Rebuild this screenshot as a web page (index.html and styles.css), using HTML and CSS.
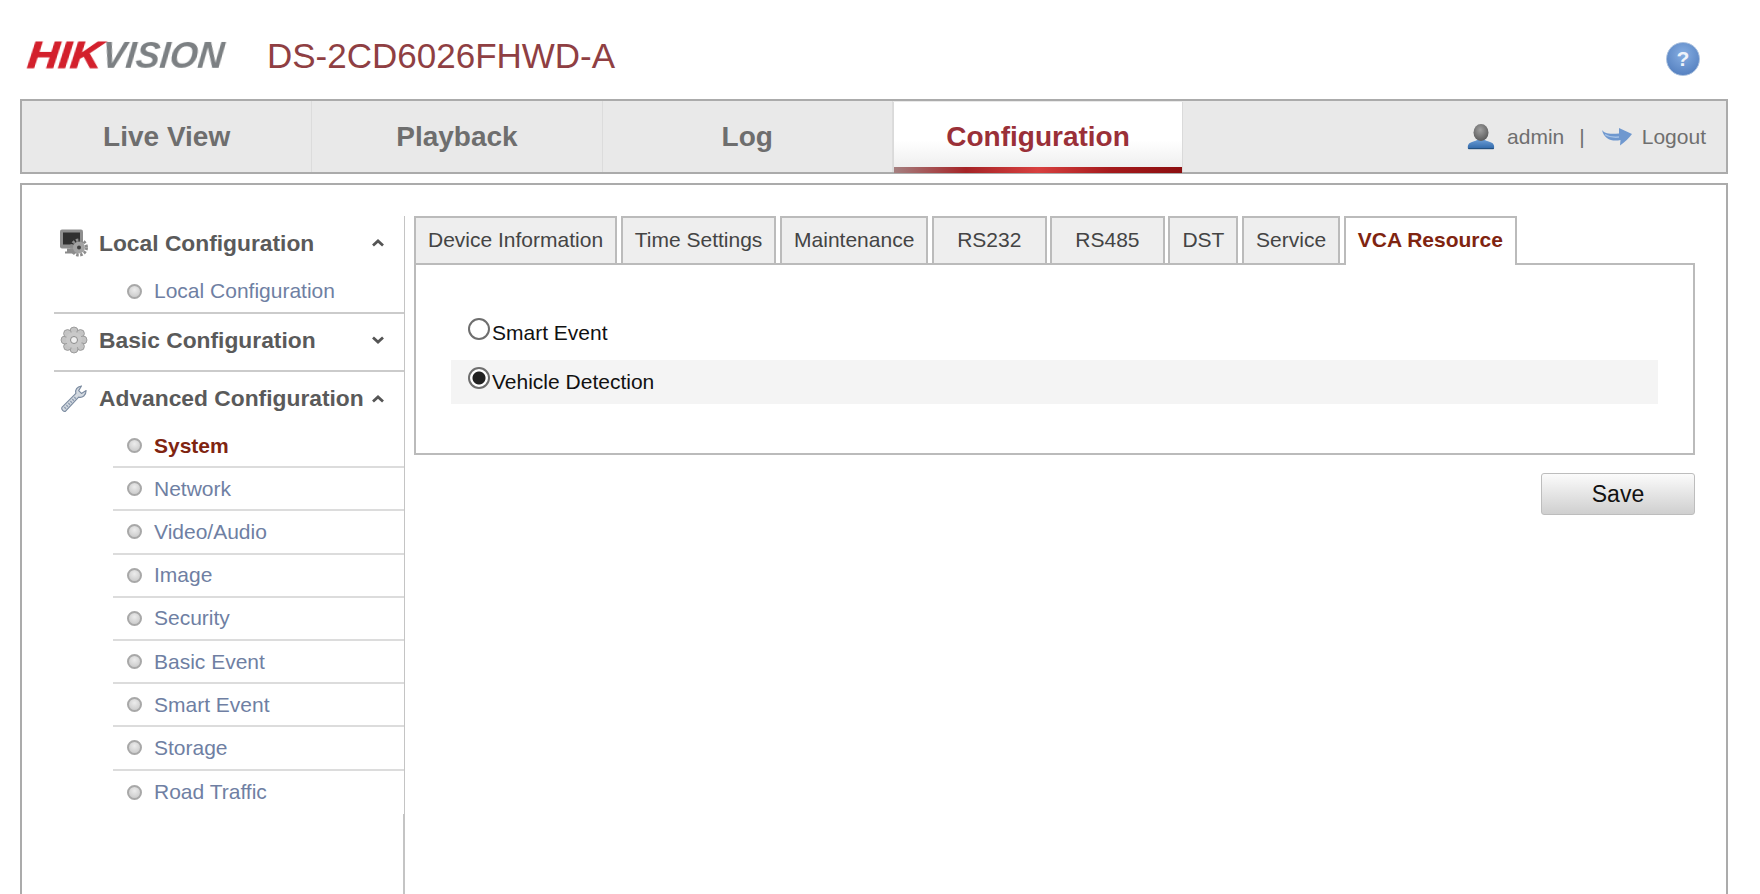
FILE: index.html
```html
<!DOCTYPE html>
<html lang="en">
<head>
    <meta charset="UTF-8">
    <meta name="viewport" content="width=device-width, initial-scale=1.0">
    <title>DS-2CD6026FHWD-A</title>
    <link rel="stylesheet" href="styles.css">
</head>
<body>
    <header class="header">
        <div class="logo"><span class="logo-red">HIK</span><span class="logo-grey">VISION</span></div>
        <div class="model">DS-2CD6026FHWD-A</div>
        <div class="help">?</div>
    </header>

    <nav class="nav">
        <a class="nav-item">Live View</a>
        <a class="nav-item">Playback</a>
        <a class="nav-item">Log</a>
        <a class="nav-item active">Configuration</a>
        <div class="user-box">
            <svg class="user-icon" viewBox="0 0 28 26">
                <defs>
                    <radialGradient id="headGrad" cx="0.45" cy="0.35" r="0.7">
                        <stop offset="0" stop-color="#a0a0a0"/>
                        <stop offset="1" stop-color="#565656"/>
                    </radialGradient>
                    <linearGradient id="bodyGrad" x1="0" y1="0" x2="0" y2="1">
                        <stop offset="0" stop-color="#6fa0d8"/>
                        <stop offset="1" stop-color="#2f67a8"/>
                    </linearGradient>
                </defs>
                <path d="M1 25c-.6-4 .6-6 4-7 3-1 5-1.500 6-3h6c1 1.500 3 2 6 3 3.400 1 4.600 3 4 7z" fill="url(#bodyGrad)"/>
                <path d="M1.500 24.600h25" stroke="#24507f" stroke-width="1.200"/>
                <ellipse cx="14" cy="8.500" rx="7.500" ry="8.500" fill="url(#headGrad)"/>
            </svg>
            <span>admin</span>
            <span class="sep">|</span>
            <svg class="logout-icon" viewBox="0 0 30 18">
                <path d="M0 2C2 5 6 6.500 17 5.500L17 0l13 6c-3 4-7 8-12 11.500l.5-5.500C10 14 2 11 0 2z" fill="#6f98cf"/>
                <path d="M3 6.500c3 2 8 3 14 2.500" stroke="#a6c2e6" stroke-width="1.500" fill="none"/>
            </svg>
            <span>Logout</span>
        </div>
    </nav>

    <div class="content">
        <aside class="sidebar">
            <div class="menu">
                <div class="section first">
                    <div class="menu-head">
                        <svg class="head-icon" viewBox="0 0 28 27">
                            <rect x="0" y="0" width="23" height="19" rx="2" fill="#8f8f8f"/>
                            <rect x="3" y="3" width="17" height="12" fill="#303030"/>
                            <path d="M7 19h9v3h2v2H5v-2h2z" fill="#8a8a8a"/>
                            <circle cx="19" cy="18" r="7.500" fill="none" stroke="#8c8c8c" stroke-width="3" stroke-dasharray="2.500 1.500"/>
                            <circle cx="19" cy="18" r="6" fill="#a2a2a2"/>
                            <circle cx="19" cy="18" r="2" fill="#3e3e3e"/>
                        </svg>
                        <span class="head-text">Local Configuration</span>
                        <svg class="chevron" viewBox="0 0 12 8"><path d="M1 6.500l5-4.500 5 4.500"/></svg>
                    </div>
                    <div class="sub-item last"><i class="dot"></i>Local Configuration</div>
                </div>
                <div class="section closed">
                    <div class="menu-head">
                        <svg class="head-icon" viewBox="0 0 28 28">
                            <g fill="#c4c4c4" stroke="#8f8f8f" stroke-width="0.800">
                                <circle cx="14" cy="5" r="4"/>
                                <circle cx="20.400" cy="7.600" r="4"/>
                                <circle cx="23" cy="14" r="4"/>
                                <circle cx="20.400" cy="20.400" r="4"/>
                                <circle cx="14" cy="23" r="4"/>
                                <circle cx="7.600" cy="20.400" r="4"/>
                                <circle cx="5" cy="14" r="4"/>
                                <circle cx="7.600" cy="7.600" r="4"/>
                            </g>
                            <circle cx="14" cy="14" r="8" fill="#c9c9c9"/>
                            <circle cx="14" cy="14" r="3.500" fill="#efefef" stroke="#8a8a8a"/>
                        </svg>
                        <span class="head-text">Basic Configuration</span>
                        <svg class="chevron" viewBox="0 0 12 8"><path d="M1 1.500l5 4.500 5-4.500"/></svg>
                    </div>
                </div>
                <div class="section">
                    <div class="menu-head">
                        <svg class="head-icon" viewBox="0 0 30 30">
                            <path d="M2 24L17 9c-1-4 1-7 6-8l-3 5 3 3 5-3c0 5-4 8-8 7L6 28c-2 1-5-2-4-4z" fill="#d3d9e0" stroke="#7b8ba0" stroke-width="1.200" stroke-linejoin="round"/>
                            <path d="M5 25l12-12" stroke="#8f9eb2" stroke-width="2.500" stroke-dasharray="1.500 1.500"/>
                        </svg>
                        <span class="head-text">Advanced Configuration</span>
                        <svg class="chevron" viewBox="0 0 12 8"><path d="M1 6.500l5-4.500 5 4.500"/></svg>
                    </div>
                    <div class="sub-item selected"><i class="dot"></i>System</div>
                    <div class="sub-item"><i class="dot"></i>Network</div>
                    <div class="sub-item"><i class="dot"></i>Video/Audio</div>
                    <div class="sub-item"><i class="dot"></i>Image</div>
                    <div class="sub-item"><i class="dot"></i>Security</div>
                    <div class="sub-item"><i class="dot"></i>Basic Event</div>
                    <div class="sub-item"><i class="dot"></i>Smart Event</div>
                    <div class="sub-item"><i class="dot"></i>Storage</div>
                    <div class="sub-item last"><i class="dot"></i>Road Traffic</div>
                </div>
            </div>
        </aside>

        <main class="main">
            <div class="tabs">
                <div class="tab">Device Information</div>
                <div class="tab">Time Settings</div>
                <div class="tab">Maintenance</div>
                <div class="tab wide">RS232</div>
                <div class="tab wide">RS485</div>
                <div class="tab">DST</div>
                <div class="tab">Service</div>
                <div class="tab current">VCA Resource</div>
            </div>
            <div class="panel">
                <label class="row"><i class="radio"></i>Smart Event</label>
                <label class="row on"><i class="radio checked"></i>Vehicle Detection</label>
            </div>
            <div class="actions">
                <button class="save">Save</button>
            </div>
        </main>
    </div>
</body>
</html>
```

FILE: styles.css
```css
html, body {
    margin: 0;
    height: 100%;
    overflow: hidden;
}
body {
    font-family: "Liberation Sans", Arial, sans-serif;
    background: #fff;
}

/* top line */
.header {
    display: flex;
    align-items: center;
    height: 99px;
    padding: 0 60px 0 28px;
    box-sizing: border-box;
}
.logo {
    width: 239px;
    font-size: 36px;
    font-weight: bold;
    font-style: italic;
    line-height: 40px;
    margin-top: 13px;
    white-space: nowrap;
    transform: skewX(-6deg);
    filter: blur(0.5px);
}
.logo-red {
    display: inline-block;
    margin-right: 12px;
    color: #d3202c;
    -webkit-text-stroke: 1px #d3202c;
    transform: scaleX(1.19);
    transform-origin: left center;
}
.logo-grey {
    color: #7c8083;
}
.model {
    font-size: 35px;
    color: #8f3f43;
    margin-top: 13px;
}
.help {
    margin-left: auto;
    margin-top: 19px;
    width: 34px;
    height: 34px;
    border-radius: 50%;
    background: radial-gradient(circle at 50% 35%, #86aee2, #4a76b8);
    border: 1px solid #a9c0de;
    box-sizing: border-box;
    color: #eef3fa;
    font-size: 21px;
    font-weight: bold;
    line-height: 32px;
    text-align: center;
}

/* main navigation */
.nav {
    display: flex;
    height: 75px;
    margin: 0 32px 9px 20px;
    border: 2px solid #ababab;
    box-sizing: border-box;
    background: #e9e9e9;
}
.nav-item {
    flex: 0 0 290.300px;
    box-sizing: border-box;
    border-right: 1px solid #dcdcdc;
    font-size: 28px;
    font-weight: bold;
    color: #6e6e6e;
    line-height: 71px;
    text-align: center;
}
.nav-item.active {
    position: relative;
    margin-top: 1px;
    background: linear-gradient(#fff 55%, #ececec);
    border-right: 1px solid #dadada;
    border-left: 1px solid #dadada;
    color: #9a3038;
    line-height: 69px;
}
.nav-item.active::after {
    content: "";
    position: absolute;
    left: 0;
    right: 0;
    bottom: -1px;
    height: 6px;
    background: linear-gradient(90deg, #a58080, #a52326 25%, #d8403f 50%, #a51a1c 75%, #8c0f10);
}
.user-box {
    display: flex;
    align-items: center;
    margin-left: auto;
    padding-right: 20px;
    font-size: 21px;
    color: #6f6f6f;
}
.user-icon {
    width: 28px;
    height: 26px;
    margin-right: 12px;
}
.sep {
    margin: 0 17px 0 15px;
}
.logout-icon {
    width: 30px;
    height: 18px;
    margin-right: 10px;
}

/* content box */
.content {
    display: flex;
    height: 730px;
    margin: 0 32px 0 20px;
    padding-top: 31px;
    border: 2px solid #ababab;
    box-sizing: border-box;
}
.sidebar {
    flex: none;
    width: 349px;
    padding-left: 32px;
    border-right: 2px solid #c4c4c4;
}
.menu {
    margin-right: -1px;
    background: #fff;
}
.section {
    border-bottom: 2px solid #cbcbcb;
}
.section:last-child {
    border-bottom: 0;
}
.section.closed {
    padding-bottom: 4px;
}
.menu-head {
    display: flex;
    align-items: center;
    height: 53px;
    font-size: 22.800px;
    font-weight: bold;
    color: #5a5a5a;
}
.first .menu-head {
    height: 54px;
}
.closed .menu-head {
    height: 52px;
}
.head-icon {
    flex: none;
    width: 28px;
    height: 28px;
    margin: 0 11px 0 6px;
}
.head-text {
    flex: 1;
    white-space: nowrap;
}
.chevron {
    flex: none;
    width: 12px;
    height: 8px;
    margin-right: 20px;
    fill: none;
    stroke: #555;
    stroke-width: 2.800;
}
.sub-item {
    display: flex;
    align-items: center;
    height: 43.200px;
    box-sizing: border-box;
    margin-left: 59px;
    padding-left: 14px;
    border-bottom: 2px solid #dcdcdc;
    font-size: 21px;
    color: #6f7fa3;
}
.sub-item.last {
    border-bottom: 0;
}
.first .sub-item {
    height: 42px;
}
.sub-item.selected {
    font-weight: bold;
    color: #7f2410;
}
.dot {
    flex: none;
    width: 15px;
    height: 15px;
    margin-right: 12px;
    border-radius: 50%;
    box-sizing: border-box;
    border: 2px solid #a8a8a8;
    background: radial-gradient(circle at 50% 35%, #ececec, #c4c4c4);
}

/* right side */
.main {
    flex: 1;
    padding: 0 31px 0 9px;
}
.tabs {
    display: flex;
    gap: 3.700px;
    height: 47px;
}
.tab {
    box-sizing: border-box;
    height: 47px;
    padding: 0 12px;
    border: 2px solid #bbb;
    border-bottom: 0;
    background: #eee;
    font-size: 21px;
    color: #444;
    line-height: 44px;
    text-align: center;
    white-space: nowrap;
}
.tab.wide {
    min-width: 114.500px;
}
.tab.current {
    position: relative;
    height: 49px;
    background: #fff;
    font-weight: bold;
    color: #7f2410;
    z-index: 1;
}
.panel {
    padding: 46px 35px 49px;
    border: 2px solid #bbb;
    background: #fff;
}
.row {
    display: flex;
    align-items: center;
    height: 44px;
    padding-left: 17px;
    font-size: 21px;
    color: #111;
}
.row + .row {
    margin-top: 5px;
}
.row.on {
    background: #f4f4f4;
}
.radio {
    flex: none;
    width: 22px;
    height: 22px;
    margin: -8px 2px 0 0;
    border-radius: 50%;
    box-sizing: border-box;
    border: 2px solid #6e6e6e;
    background: #fff;
}
.radio.checked {
    background: radial-gradient(circle, #222 0, #222 6px, #fff 7px);
}
.actions {
    display: flex;
    justify-content: flex-end;
    margin-top: 18px;
}
.save {
    width: 154px;
    height: 42px;
    border: 1px solid #bdbdbd;
    border-radius: 3px;
    background: linear-gradient(#fbfbfb, #cfcfcf);
    font-family: inherit;
    font-size: 23px;
    color: #111;
}
```
